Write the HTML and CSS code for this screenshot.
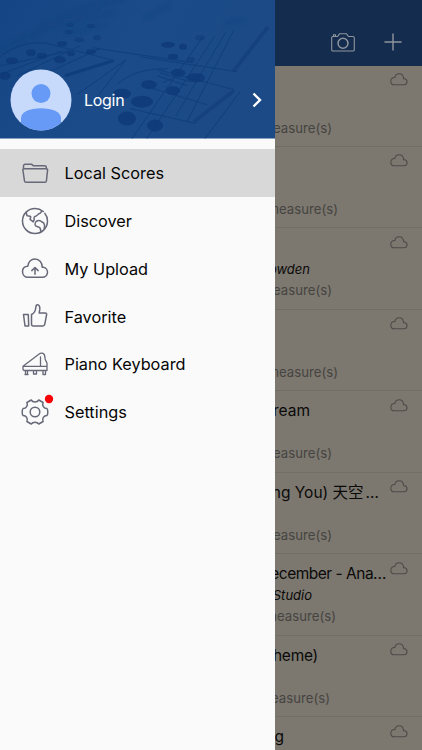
FILE: index.html
```html
<!DOCTYPE html>
<html lang="en">
<head>
<meta charset="utf-8">
<title>Scores</title>
<link rel="stylesheet" href="styles.css">
</head>
<body>
<svg class="defs" width="0" height="0">
  <symbol id="cloud" viewBox="0 0 18 13"><path d="M4 11.800h10a3.100 3.100 0 0 0 .7-6.100h-1.100C13.400 2.700 11.500.8 9.100.8 6.900.8 5.300 2.300 4.900 4.500 2.400 4.300.8 6 .8 8.200c0 2 1.300 3.600 3.200 3.600z"/></symbol>
</svg>
<div class="app">
  <aside class="drawer">
    <header class="profile">
      <svg class="sheet" viewBox="0 0 275 139" preserveAspectRatio="none">
        <defs>
          <linearGradient id="shade" x1="0" x2="1" y1="0" y2="0.3"><stop offset="0" stop-color="#154584"/><stop offset=".5" stop-color="#1b4b89"/><stop offset="1" stop-color="#1b4a86"/></linearGradient>
          <filter id="soft"><feGaussianBlur stdDeviation=".7"/></filter>
          <filter id="far"><feGaussianBlur stdDeviation="2"/></filter>
        </defs>
        <rect width="275" height="139" fill="url(#shade)"/>
        <g filter="url(#far)" fill="none" stroke="#123f7c" stroke-width="2" opacity=".5">
          <path d="M43 25 84 8 125-2M75 22l40-10M145 18l25-14M66 33l38-8M225 24l18-4M0 49l40-18 60-22"/>
        </g>
        <g filter="url(#soft)" fill="none" stroke="#0f3c79" stroke-width="1" opacity=".8">
          <path d="M0 57C15 46 28 42 45 43L115 61M0 66l70-15M0 75l62-24M17 76 80 46M34 79l66-30M77 95 126 60 95 100M93 48l100 15"/>
          <path d="M215 36 147 139M202 38 132 139M226 32 176 116M234 30 187 122M240 92 205 139M140 57l97 15"/>
          <path d="M118 84c12-10 25-15 50-15M158 70l76 20M147 87l60 18M130 109l66 15"/>
          <path d="M65 76 113 61" stroke-width="3"/>
          <path d="M268 27l-35 45M234 91l-40 31" stroke-width="3.500" opacity=".7"/>
        </g>
        <g filter="url(#soft)" fill="#0b3777" opacity=".75">
          <ellipse cx="12" cy="61" rx="6" ry="3.500"/><ellipse cx="31" cy="53" rx="5" ry="3.500"/><ellipse cx="42" cy="56" rx="5" ry="3"/><ellipse cx="60" cy="60" rx="6" ry="3.500"/><ellipse cx="5" cy="76" rx="6" ry="4"/><ellipse cx="62" cy="44" rx="5" ry="2.500"/><ellipse cx="91" cy="52" rx="5" ry="2.500"/><ellipse cx="71" cy="54" rx="4" ry="2.500"/><ellipse cx="79" cy="40" rx="5" ry="2.500" opacity=".7"/><ellipse cx="97" cy="38" rx="4" ry="2.500" opacity=".7"/>
          <ellipse cx="69" cy="32" rx="4" ry="2" opacity=".6"/><ellipse cx="91" cy="26" rx="4" ry="2" opacity=".6"/><ellipse cx="70" cy="25" rx="4" ry="2" opacity=".6"/>
          <ellipse cx="168" cy="45" rx="7" ry="3"/><ellipse cx="183" cy="47" rx="4" ry="3"/><ellipse cx="173" cy="57" rx="5" ry="3"/><ellipse cx="200" cy="38" rx="5" ry="2.500" opacity=".6"/><ellipse cx="191" cy="60" rx="4" ry="2.500" opacity=".7"/>
          <ellipse cx="149" cy="85" rx="8" ry="4.500"/><ellipse cx="178" cy="73" rx="7" ry="4"/><ellipse cx="196" cy="78" rx="9" ry="4.500"/><ellipse cx="173" cy="91" rx="7" ry="4.500"/><ellipse cx="122" cy="94" rx="9" ry="5"/><ellipse cx="142" cy="102" rx="11" ry="6"/><ellipse cx="127" cy="119" rx="9" ry="7"/><ellipse cx="155" cy="126" rx="8" ry="6"/>
          <path d="M157 76l30 10M160 73l30 9M163 83l23-10" stroke="#0e3a78" fill="none"/>
        </g>
      </svg>
      <div class="profile-row">
        <svg class="avatar" viewBox="0 0 62 62">
          <defs><clipPath id="disc"><circle cx="31" cy="31" r="30.500"/></clipPath></defs>
          <g clip-path="url(#disc)"><rect width="62" height="62" fill="#c8dafc"/><circle cx="31" cy="24.500" r="9.500" fill="#669af6"/><path d="M11 62V49c0-6 9-9.700 20-9.700S51 43 51 49v13z" fill="#669af6"/></g>
        </svg>
        <span class="login">Login</span>
        <svg class="chevron" viewBox="0 0 10 16"><path d="M1.500 1.500 8 8l-6.500 6.500"/></svg>
      </div>
    </header>
    <nav class="menu">
      <a class="item active"><svg class="icon" viewBox="0 0 28 28"><path d="M2.500 10V7c0-1 .7-1.800 1.500-1.800h6.500l2 1.600h11c1.200 0 1.800.6 1.800 1.500V10M2.500 9.800h23c.8 0 1.200.5 1.100 1.200l-1.200 11c-.1.900-.7 1.300-1.500 1.300H5c-.9 0-1.400-.5-1.500-1.300L1.900 11c-.1-.7.100-1.200.6-1.200z"/></svg><span>Local Scores</span></a>
      <a class="item"><svg class="icon" viewBox="0 0 28 28"><path d="M22.300 4.500C20 2.600 17.400 1.500 14 1.500 7 1.500 1.500 7 1.500 14S7 26.500 14 26.500 26.500 21 26.500 14c0-3-.9-5.600-2.600-7.600M5.200 5.500 6 8.700c1.400.7 3-.2 3.800 1.100l-.7 2.500 3.200 2.500 1-2.300c-.9-1.800.2-3.300 1.900-3.600 1.400-.3 1.500-2 3.300-2.300 1.300-.5 2-1.300 2-3M20 24.800c-.7-1.500-.2-3.300-1.500-4.400-1.500-1-3.300-.5-4.200-2.100-.7-1.900.4-3.900 2.200-4.600 2-.7 3.200-.2 4.200 1 1.600.6 2.700 1.800 2.800 3.300.2 1.800 0 3-.5 4.300"/></svg><span>Discover</span></a>
      <a class="item"><svg class="icon" viewBox="0 0 28 28"><path d="M7 23.300h14.500a5.100 5.100 0 0 0 .9-10.100h-1.200C21.300 8.500 18 4.900 14 4.900S7.200 8 6.800 12.200C3.500 12.300 1.500 14.600 1.500 17.600c0 3.300 2.300 5.700 5.500 5.700zM14 20.200v-6.500M10.800 16.600 14 13.500l3.200 3.100"/></svg><span>My Upload</span></a>
      <a class="item"><svg class="icon" viewBox="0 0 28 28"><path d="M2.500 12.500h4.800L7.700 24H4zM10.500 12.500c2.500-1 4-3.800 4.300-7 .1-2 .6-2.700 1.700-2.700 2 0 2.500 2.700 2.300 4.400l-.6 3.800h6.100c1 0 1.500.7 1.300 1.700l-1.800 9.500c-.2 1.200-.9 1.800-2 1.800h-9.500c-1.100 0-1.800-.6-1.800-1.700z"/></svg><span>Favorite</span></a>
      <a class="item"><svg class="icon" viewBox="0 0 28 28"><path d="M2 16.200 17.500 4.400c1.500-1.200 3-1.700 4.500-1 1.700.8 2 2.800 2 4.800 0 2.500 2 3.200 2 5.300v7H3.500c-1 0-1.500-.5-1.500-1.500zM2 16.400h24M19.500 7v9.200M4.500 20.500v4M6.500 20.500v4M4 24.500h3M12.500 20.500v3.500h3v-3.500M22 20.500v4h2.500v-4" stroke-width="1.300"/></svg><span>Piano Keyboard</span></a>
      <a class="item"><svg class="icon" viewBox="0 0 28 28"><circle cx="14" cy="14" r="4.800"/><path d="M10.200 2c1.700 2.500 5.900 2.500 7.600 0l4.300 2.500c-1.300 3 .7 6 3.800 6 .8.700.9 1.700.9 3.500s-.1 2.800-.9 3.500c-3.100 0-5.100 3-3.800 6L17.800 26c-1.700-2.500-5.900-2.500-7.600 0l-4.300-2.500c1.300-3-.7-6-3.800-6-.8-.7-.9-1.700-.9-3.500s.1-2.800.9-3.500c3.100 0 5.100-3 3.800-6z"/></svg><svg class="dot" viewBox="0 0 10 10"><circle cx="5" cy="5" r="4.200"/></svg><span>Settings</span></a>
    </nav>
  </aside>
  <main class="main">
    <header class="bar">
      <svg class="camera" viewBox="0 0 24 19"><path d="M2 3.500h4.500L8.500.8h7l2 2.700H22c.8 0 1.300.5 1.300 1.200v12c0 .8-.5 1.300-1.300 1.300H2c-.8 0-1.300-.5-1.300-1.300v-12c0-.7.500-1.200 1.300-1.200zM2.500 3V1.700h2V3"/><circle cx="12" cy="10.200" r="5" stroke-width="1.500"/></svg>
      <svg class="plus" viewBox="0 0 18 18"><path d="M9 .5v17M.5 9h17"/></svg>
    </header>
    <section class="row"><svg class="cloud"><use href="#cloud"/></svg><p class="meta end-57">measure(s)</p></section>
    <section class="row"><svg class="cloud"><use href="#cloud"/></svg><p class="meta end-63">measure(s)</p></section>
    <section class="row"><svg class="cloud"><use href="#cloud"/></svg><p class="author end-35">owden</p><p class="meta end-57">measure(s)</p></section>
    <section class="row"><svg class="cloud"><use href="#cloud"/></svg><p class="meta end-63">measure(s)</p></section>
    <section class="row"><svg class="cloud"><use href="#cloud"/></svg><p class="title end-35">ream</p><p class="meta end-57">measure(s)</p></section>
    <section class="row"><svg class="cloud"><use href="#cloud"/></svg><p class="title end-104">ng You) 天空<span class="more">…</span></p><p class="meta end-57">measure(s)</p></section>
    <section class="row"><svg class="cloud"><use href="#cloud"/></svg><p class="title tighter end-111">ecember - Ana…</p><p class="author end-37">Studio</p><p class="meta end-61">measure(s)</p></section>
    <section class="row"><svg class="cloud"><use href="#cloud"/></svg><p class="title tight end-43">heme)</p><p class="meta end-55">measure(s)</p></section>
    <section class="row"><svg class="cloud"><use href="#cloud"/></svg><p class="title end-9">g</p></section>
  </main>
</div>
</body>
</html>
```
FILE: styles.css
```css
* { box-sizing: border-box; }
body { margin: 0; font-family: Inter, "Noto Sans CJK SC", sans-serif; }
svg { display: block; fill: none; flex: none; }
.defs { position: absolute; }
.app { display: grid; grid-template-columns: 275px 147px; width: 422px; height: 750px; overflow: hidden; }

.drawer { background: #fafafa; color: #050505; }
.profile { position: relative; height: 138.5px; padding-top: 69px; overflow: hidden; }
.sheet { position: absolute; inset: 0; width: 100%; height: 100%; }
.profile-row { position: relative; display: flex; align-items: center; padding: 0 13px 0 10px; height: 62px; }
.avatar { width: 62px; height: 62px; }
.login { flex: 1; margin-left: 12px; color: #fff; font-size: 16px; letter-spacing: -.3px; }
.chevron { width: 10px; height: 16px; stroke: #fff; stroke-width: 2.4; }

.menu { padding-top: 10.5px; }
.item { position: relative; display: flex; align-items: center; height: 47.8px; padding-left: 21px; gap: 15.5px; font-size: 16.3px; letter-spacing: 0; }
.item span { padding-top: .5px; }
.active { background: #d8d8d8; }
.icon { width: 28px; height: 28px; stroke: #676878; stroke-width: 1.5; stroke-linejoin: round; stroke-linecap: round; }
.dot { position: absolute; left: 44px; top: 6px; width: 10px; height: 10px; fill: #f90007; }

.main { display: flex; flex-direction: column; min-width: 0; overflow: hidden; background: #7c7870; color: #0b0a09; }
.bar { flex: none; display: flex; align-items: flex-start; height: 65.5px; padding: 33px 0 0 55.5px; gap: 29px; background: #142c4e; stroke: #8f959d; }
.camera { width: 24px; height: 19px; stroke-width: 1.1; }
.plus { width: 18px; height: 18px; stroke-width: 1.4; }
.row { flex: none; position: relative; display: grid; grid-template-rows: 31px 20px 21px; justify-items: start; height: 81.45px; padding-top: 3px; border-bottom: 1px solid #716e68; }
.cloud { position: absolute; left: 114.5px; top: 7.5px; width: 18px; height: 13px; stroke: #4d4b48; stroke-width: 1.1; }
.row p { display: flex; justify-content: flex-end; margin: 0; white-space: nowrap; }
.title { grid-row: 1; font-size: 15.5px; line-height: 34.5px; }
.tight { letter-spacing: -.25px; }
.tighter { letter-spacing: -.5px; }
.more { margin-left: 2px; }
.author { grid-row: 2; font-size: 13px; line-height: 15px; font-style: italic; }
.meta { grid-row: 3; font-size: 13.2px; line-height: 16px; color: #464440; }
.end-9 { width: 9px; }
.end-35 { width: 35px; }
.end-37 { width: 37px; }
.end-43 { width: 43px; }
.end-55 { width: 55px; }
.end-57 { width: 57px; }
.end-61 { width: 61px; }
.end-63 { width: 63px; }
.end-104 { width: 104px; }
.end-111 { width: 111px; }
```
